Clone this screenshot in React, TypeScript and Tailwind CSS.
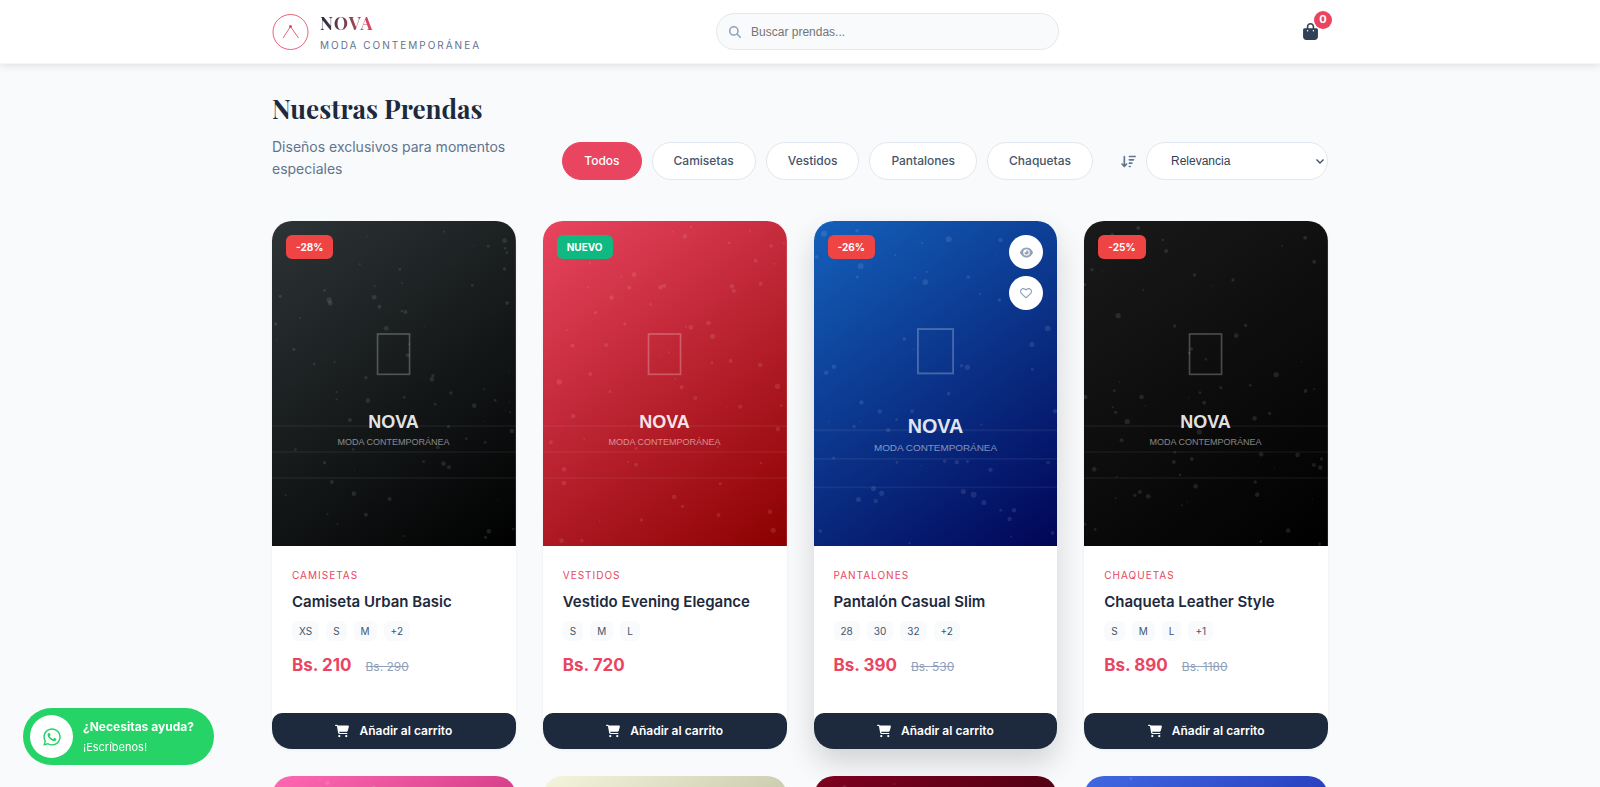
import { useState } from "react";
import {
  FaArrowDownWideShort,
  FaBagShopping,
  FaCartShopping,
  FaEye,
  FaMagnifyingGlass,
  FaRegHeart,
  FaWhatsapp,
} from "react-icons/fa6";

// x, y, radius of a speck on the cover
type Dot = [number, number, number];

interface CoverArt {
  id: string;
  from: string;
  to: string;
  dots: Dot[];
}

interface Product {
  name: string;
  category: string;
  badge: string;
  isNew?: boolean;
  active?: boolean;
  sizes: string[];
  price: string;
  oldPrice?: string;
  cover: CoverArt;
}

const products: Product[] = [
  {
    name: "Camiseta Urban Basic",
    category: "Camisetas",
    badge: "-28%",
    sizes: ["XS", "S", "M", "+2"],
    price: "Bs. 210",
    oldPrice: "Bs. 290",
    cover: {
      id: "urban",
      from: "#2d3436",
      to: "#000000",
      dots: [
        [516, 32, 3], [287, 47, 2], [698, 59, 7], [607, 74, 2], [649, 76, 4], [700, 82, 4], [705, 95, 4],
        [264, 130, 3], [384, 145, 4], [698, 144, 5], [390, 186, 3], [308, 194, 3], [601, 193, 4], [158, 208, 4],
        [25, 226, 5], [307, 229, 7], [172, 237, 8], [175, 247, 7], [323, 257, 6], [706, 246, 6], [390, 270, 4],
        [401, 273, 6], [85, 291, 3], [11, 309, 5], [343, 322, 7], [457, 317, 2], [15, 357, 2], [66, 385, 5],
        [407, 403, 6], [412, 370, 3], [188, 423, 3], [127, 429, 4], [712, 451, 2], [483, 464, 5], [480, 475, 7],
        [282, 470, 5], [637, 505, 3], [194, 513, 3], [194, 535, 3], [537, 516, 5], [397, 529, 4], [288, 539, 7],
        [670, 538, 4], [713, 543, 2], [490, 550, 4], [607, 554, 7], [700, 567, 2], [715, 573, 3], [636, 601, 2],
        [234, 597, 6], [530, 617, 5], [720, 630, 7], [583, 653, 4], [640, 664, 4], [498, 679, 6], [71, 686, 4],
        [244, 685, 4], [455, 722, 4], [158, 725, 5], [515, 728, 7], [531, 739, 6], [248, 748, 2], [180, 783, 6],
        [246, 818, 7], [353, 834, 6], [41, 823, 3], [678, 837, 2], [167, 880, 3], [282, 881, 6], [197, 910, 3],
        [651, 931, 7], [724, 924, 4], [395, 945, 3], [641, 949, 5],
      ],
    },
  },
  {
    name: "Vestido Evening Elegance",
    category: "Vestidos",
    badge: "NUEVO",
    isNew: true,
    sizes: ["S", "M", "L"],
    price: "Bs. 720",
    cover: {
      id: "evening",
      from: "#e94560",
      to: "#8b0000",
      dots: [
        [444, 18, 4], [389, 32, 3], [426, 46, 7], [621, 30, 3], [559, 66, 4], [685, 75, 5], [723, 67, 3],
        [638, 119, 6], [694, 128, 3], [142, 126, 3], [274, 161, 7], [236, 167, 3], [135, 199, 3], [259, 200, 6],
        [353, 199, 7], [364, 194, 6], [567, 196, 7], [573, 210, 6], [653, 188, 6], [206, 230, 7], [323, 250, 4],
        [158, 275, 5], [246, 309, 5], [73, 327, 3], [430, 317, 3], [444, 319, 7], [497, 306, 7], [509, 346, 8],
        [89, 374, 6], [190, 372, 6], [378, 394, 3], [354, 407, 2], [10, 402, 2], [507, 425, 4], [563, 420, 6],
        [652, 432, 7], [142, 459, 6], [49, 483, 8], [397, 473, 3], [416, 499, 6], [704, 496, 8], [201, 512, 4],
        [457, 531, 6], [715, 554, 4], [592, 557, 6], [552, 560, 2], [91, 585, 7], [705, 624, 7], [265, 627, 2],
        [124, 654, 3], [24, 664, 6], [280, 682, 5], [525, 678, 4], [255, 723, 3], [280, 731, 6], [654, 726, 4],
        [64, 745, 7], [63, 786, 7], [532, 788, 5], [394, 828, 7], [419, 856, 5], [681, 872, 7], [527, 882, 6],
        [296, 897, 5], [170, 900, 2], [691, 928, 8], [56, 959, 7], [117, 959, 5],
      ],
    },
  },
  {
    name: "Pantalón Casual Slim",
    category: "Pantalones",
    badge: "-26%",
    active: true,
    sizes: ["28", "30", "32", "+2"],
    price: "Bs. 390",
    oldPrice: "Bs. 530",
    cover: {
      id: "casual",
      from: "#1565c0",
      to: "#000051",
      dots: [
        [61, 79, 8], [151, 71, 5], [401, 94, 8], [328, 104, 3], [542, 96, 6], [531, 135, 2], [255, 137, 3],
        [41, 142, 5], [161, 167, 8], [341, 183, 3], [152, 197, 4], [309, 199, 3], [337, 211, 8], [454, 197, 5],
        [487, 243, 3], [539, 260, 5], [671, 337, 8], [628, 381, 7], [280, 366, 5], [306, 394, 2], [88, 442, 6],
        [67, 458, 6], [436, 439, 5], [452, 443, 7], [629, 449, 4], [401, 515, 5], [163, 539, 6], [213, 564, 6],
        [301, 563, 5], [691, 563, 6], [259, 586, 4], [74, 592, 2], [161, 592, 2], [143, 605, 5], [236, 615, 6],
        [490, 600, 3], [87, 691, 4], [390, 699, 5], [423, 702, 6], [452, 700, 4], [260, 703, 4], [327, 712, 2],
        [515, 723, 6], [672, 703, 5], [196, 774, 7], [218, 787, 7], [155, 804, 7], [202, 808, 6], [441, 782, 7],
        [469, 791, 8], [497, 812, 7], [543, 833, 4], [579, 833, 6], [567, 857, 6], [51, 890, 5], [684, 895, 5],
        [571, 905, 3], [294, 923, 3],
      ],
    },
  },
  {
    name: "Chaqueta Leather Style",
    category: "Chaquetas",
    badge: "-25%",
    sizes: ["S", "M", "L", "+1"],
    price: "Bs. 890",
    oldPrice: "Bs. 1180",
    cover: {
      id: "leather",
      from: "#1a1a1a",
      to: "#000000",
      dots: [
        [163, 21, 6], [85, 40, 5], [237, 57, 4], [247, 90, 6], [664, 50, 6], [595, 74, 3], [691, 122, 6],
        [24, 146, 5], [55, 149, 2], [332, 162, 5], [447, 177, 5], [385, 195, 2], [2, 191, 5], [178, 208, 3],
        [103, 284, 8], [272, 315, 5], [485, 313, 5], [457, 344, 7], [323, 384, 5], [316, 396, 4], [366, 415, 4],
        [653, 423, 2], [577, 461, 8], [107, 483, 2], [91, 509, 4], [411, 500, 5], [499, 493, 4], [665, 510, 6],
        [691, 504, 3], [348, 515, 4], [173, 528, 7], [4, 528, 7], [315, 531, 2], [361, 545, 6], [87, 559, 3],
        [184, 555, 2], [95, 574, 5], [557, 577, 5], [130, 602, 8], [512, 592, 7], [346, 633, 8], [113, 658, 6],
        [273, 694, 4], [270, 723, 6], [324, 714, 6], [532, 700, 7], [641, 702, 7], [713, 714, 5], [690, 732, 6],
        [709, 740, 7], [572, 739, 2], [31, 745, 7], [289, 762, 4], [98, 767, 3], [335, 796, 7], [514, 783, 5],
        [168, 813, 6], [153, 823, 5], [193, 826, 7], [95, 832, 3], [520, 821, 7], [685, 834, 2], [311, 843, 2],
        [294, 853, 3], [34, 925, 4], [4, 910, 4], [613, 929, 7], [531, 962, 4], [707, 969, 5],
      ],
    },
  },
];

// Next row, only the cover backgrounds are loaded
const upcoming: CoverArt[] = [
  { id: "pink", from: "#ff69b4", to: "#96004a", dots: [[144, 14, 3], [167, 21, 7], [305, 34, 6]] },
  { id: "beige", from: "#f5f5dc", to: "#8b8b6b", dots: [] },
  { id: "burgundy", from: "#800020", to: "#0a0000", dots: [[92, 33, 6], [242, 24, 3]] },
  { id: "royal", from: "#4169e1", to: "#00008b", dots: [[141, 8, 5]] },
];

const filters = ["Todos", "Camisetas", "Vestidos", "Pantalones", "Chaquetas"];

const LogoIcon = () => (
  <svg width="38" height="38" viewBox="0 0 38 38" fill="none" stroke="#e94560" aria-hidden="true">
    <circle cx="18.5" cy="19" r="17.5" strokeWidth="1" strokeOpacity="0.85" />
    <path d="M11 25L18.5 13.5L26.5 25" strokeWidth="1" strokeOpacity="0.85" />
    <circle cx="18.5" cy="13.5" r="1.5" fill="#e94560" stroke="none" />
  </svg>
);

const ChevronIcon = () => (
  <svg width="8" height="5" viewBox="0 0 8 5" fill="none" stroke="#475569" strokeWidth="1.4" aria-hidden="true">
    <path d="M0.5 0.5L4 4L7.5 0.5" />
  </svg>
);

function Cover({ art, labelled, zoomed }: { art: CoverArt; labelled?: boolean; zoomed?: boolean }) {
  return (
    <svg
      viewBox="0 0 732 975"
      preserveAspectRatio="xMidYMid slice"
      className={`block w-full h-full ${zoomed ? "scale-110" : ""}`}
      aria-hidden="true"
    >
      <defs>
        <linearGradient id={art.id} gradientUnits="userSpaceOnUse" x1="0" y1="0" x2="732" y2="975">
          <stop offset="0" stopColor={art.from} />
          <stop offset="1" stopColor={art.to} />
        </linearGradient>
      </defs>
      <rect width="732" height="975" fill={`url(#${art.id})`} />
      {art.dots.map(([x, y, r]) => (
        <circle key={`${x}-${y}`} cx={x} cy={y} r={r} fill="#fff" fillOpacity="0.1" />
      ))}
      {labelled && (
        <>
          {[615, 693, 771].map((y) => (
            <line key={y} x1="0" x2="732" y1={y} y2={y} stroke="#fff" strokeOpacity="0.06" strokeWidth="5" />
          ))}
          <rect x="317" y="339" width="96" height="121" fill="none" stroke="#fff" strokeOpacity="0.25" strokeWidth="5" />
          <g textAnchor="middle" fill="#fff" className="font-['Liberation_Sans',Arial,sans-serif]">
            <text x="365" y="622" fontSize="54" fontWeight="700" fillOpacity="0.9">NOVA</text>
            <text x="365" y="672" fontSize="27" fillOpacity="0.5">MODA CONTEMPORÁNEA</text>
          </g>
        </>
      )}
    </svg>
  );
}

function ProductCard({ product }: { product: Product }) {
  const { name, category, badge, isNew, active, sizes, price, oldPrice, cover } = product;
  return (
    <article
      className={`flex flex-col bg-white rounded-[20px] ${
        active ? "shadow-[0_14px_30px_rgba(0,0,0,0.16)]" : "shadow-[0_1px_3px_rgba(0,0,0,0.06)]"
      }`}
    >
      <div className="relative aspect-[3/4] overflow-hidden rounded-t-[20px]">
        <Cover art={cover} labelled zoomed={active} />
        <span
          className={`absolute top-3.5 left-3.5 px-2.5 rounded-md text-[10px] leading-6 font-bold text-white ${
            isNew ? "bg-[#10b981]" : "bg-[#ef4444]"
          }`}
        >
          {badge}
        </span>
        {active && (
          <div className="absolute top-3.5 right-3.5 flex flex-col gap-[7px]">
            <button aria-label="Vista rápida" className="w-[34px] h-[34px] flex items-center justify-center rounded-full bg-white text-slate-400">
              <FaEye size={13} />
            </button>
            <button aria-label="Favorito" className="w-[34px] h-[34px] flex items-center justify-center rounded-full bg-white text-slate-400">
              <FaRegHeart size={12} />
            </button>
          </div>
        )}
      </div>

      <div className="px-5 pt-[21px] pb-9">
        <p className="text-[10px] leading-4 tracking-[1px] uppercase text-[#e94560]">{category}</p>
        <h3 className="mt-2 text-[15px] leading-[22px] font-semibold text-slate-800">{name}</h3>
        <div className="mt-2 flex gap-[7px]">
          {sizes.map((size) => (
            <span key={size} className="px-[7px] rounded-md bg-slate-50 text-[10px] leading-5 text-slate-600">
              {size}
            </span>
          ))}
        </div>
        <div className="mt-3 flex items-baseline gap-3.5">
          <span className="text-[17px] leading-6 font-bold text-[#e94560]">{price}</span>
          {oldPrice && <s className="text-xs text-slate-400">{oldPrice}</s>}
        </div>
      </div>

      <button className="h-9 flex items-center justify-center gap-2.5 rounded-t-[10px] rounded-b-[20px] bg-slate-800 text-xs font-semibold text-white">
        <FaCartShopping size={14} />
        Añadir al carrito
      </button>
    </article>
  );
}

export default function App() {
  const [filter, setFilter] = useState("Todos");

  return (
    <div className="h-screen overflow-hidden bg-slate-50 font-['Inter',sans-serif] text-slate-800">
      {/* Header */}
      <header className="relative bg-white border-b border-slate-100 shadow-[0_2px_8px_rgba(0,0,0,0.1)]">
        <div className="max-w-[1056px] h-[63px] mx-auto flex items-center justify-between">
          <a href="#" className="flex items-center gap-2.5">
            <LogoIcon />
            <span className="flex flex-col pt-0.5">
              <span className="self-start font-['Playfair_Display','Liberation_Serif',serif] text-lg leading-6 font-bold tracking-[1px] bg-gradient-to-r from-slate-800 to-[#e94560] bg-clip-text text-transparent">
                NOVA
              </span>
              <span className="text-[10px] leading-5 tracking-[2px] text-slate-500">MODA CONTEMPORÁNEA</span>
            </span>
          </a>

          <label className="w-[343px] h-[37px] flex items-center gap-2.5 px-3 rounded-full border border-slate-200 bg-slate-50 text-slate-400">
            <FaMagnifyingGlass size={12} />
            <input
              type="search"
              aria-label="Buscar prendas"
              placeholder="Buscar prendas..."
              className="flex-1 bg-transparent outline-none font-['Liberation_Sans',Arial,sans-serif] text-xs text-slate-700 placeholder:text-[#757575]"
            />
          </label>

          <button aria-label="Carrito" className="relative w-[34px] h-[34px] flex items-center justify-center text-slate-700">
            <FaBagShopping size={17} />
            <span className="absolute -top-1 -right-1 w-[18px] h-[18px] flex items-center justify-center rounded-full bg-[#e94560] text-[11px] font-bold text-white">
              0
            </span>
          </button>
        </div>
      </header>

      <main className="max-w-[1056px] mx-auto pt-7">
        {/* Section heading and filters */}
        <div className="flex items-end justify-between">
          <div className="max-w-[260px]">
            <h1 className="font-['Playfair_Display','Liberation_Serif',serif] text-[26px] leading-[34px] font-bold whitespace-nowrap">
              Nuestras Prendas
            </h1>
            <p className="mt-2.5 text-sm leading-[22px] text-slate-500">
              Diseños exclusivos para momentos especiales
            </p>
          </div>

          <div className="flex items-center gap-7">
            <div className="flex gap-2.5">
              {filters.map((item) => (
                <button
                  key={item}
                  onClick={() => setFilter(item)}
                  className={`h-[38px] px-[21px] rounded-full border text-xs font-medium ${
                    filter === item
                      ? "bg-[#e94560] border-[#e94560] text-white"
                      : "bg-white border-slate-200 text-slate-600"
                  }`}
                >
                  {item}
                </button>
              ))}
            </div>
            <label className="relative flex items-center gap-2.5 text-slate-500">
              <FaArrowDownWideShort size={15} />
              <select
                aria-label="Ordenar por"
                className="appearance-none w-[182px] h-[38px] px-6 rounded-full border border-slate-200 bg-white font-['Liberation_Sans',Arial,sans-serif] text-xs text-slate-700"
              >
                <option>Relevancia</option>
              </select>
              <span className="absolute right-1 inset-y-0 flex items-center pointer-events-none">
                <ChevronIcon />
              </span>
            </label>
          </div>
        </div>

        {/* Products */}
        <div className="mt-[41px] grid grid-cols-4 gap-[27px]">
          {products.map((product) => (
            <ProductCard key={product.name} product={product} />
          ))}
          {upcoming.map((art) => (
            <div key={art.id} className="relative aspect-[3/4] overflow-hidden rounded-t-[20px]">
              <Cover art={art} />
            </div>
          ))}
        </div>
      </main>

      {/* WhatsApp help */}
      <a
        href="#"
        className="fixed left-[23px] bottom-[22px] flex items-center gap-2.5 py-[7px] pl-[7px] pr-5 rounded-full bg-[#25d366] text-white"
      >
        <span className="w-[43px] h-[43px] flex items-center justify-center rounded-full bg-white text-[#25d366]">
          <FaWhatsapp size={20} />
        </span>
        <span className="flex flex-col">
          <span className="text-xs leading-5 font-bold">¿Necesitas ayuda?</span>
          <span className="text-[11px] leading-5">¡Escríbenos!</span>
        </span>
      </a>
    </div>
  );
}
